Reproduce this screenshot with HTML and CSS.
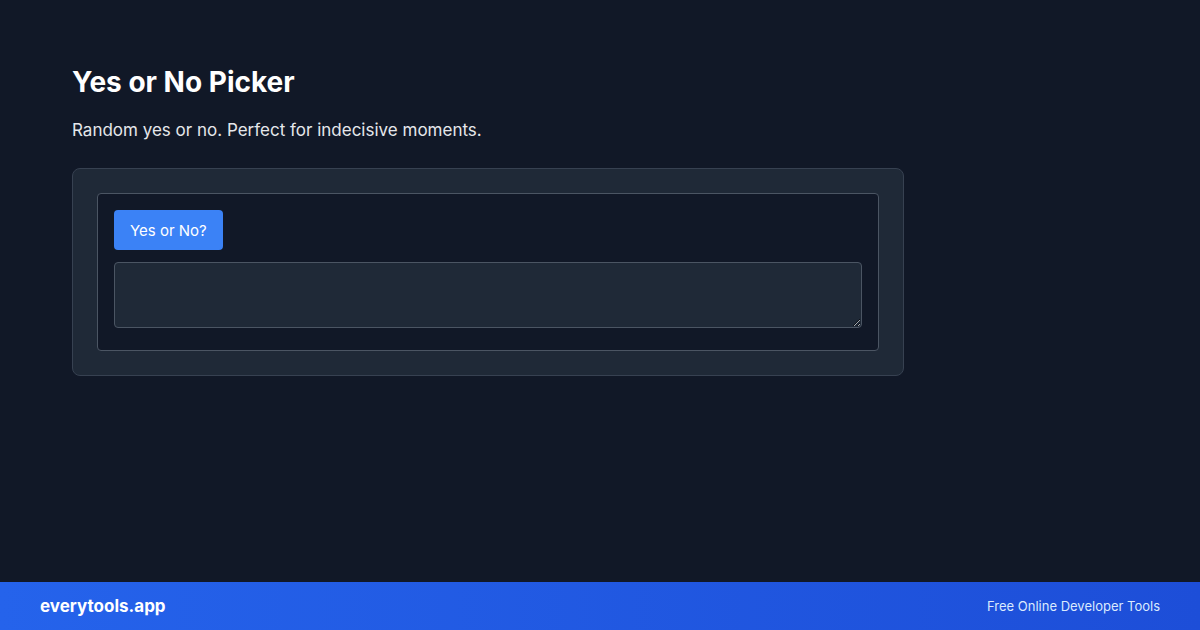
FILE: index.html
```html
<!DOCTYPE html>
<html lang="en">
<head>
    <meta charset="UTF-8">
    <meta name="viewport" content="width=device-width, initial-scale=1.0">
    <title>Yes or No Picker</title>
    <link rel="stylesheet" href="styles.css">
</head>
<body>
    <main class="page">
        <h1 class="page-title">Yes or No Picker</h1>
        <p class="page-desc">Random yes or no. Perfect for indecisive moments.</p>
        <div class="tool-card">
            <div class="tool-panel">
                <button type="button" class="pick-btn">Yes or No?</button>
                <textarea class="result-box" readonly></textarea>
            </div>
        </div>
    </main>
    <footer class="footer">
        <span class="brand">everytools.app</span>
        <span class="tagline">Free Online Developer Tools</span>
    </footer>
</body>
</html>
```

FILE: styles.css
```css
html, body {
    height: 100%;
}

body {
    margin: 0;
    display: flex;
    flex-direction: column;
    background-color: #111827;
    color: #fff;
    font-family: Inter, "Noto Sans", sans-serif;
}

.page {
    flex: 1;
    padding: 64px 72px 0;
    width: 832px;
}

.page-title {
    margin: 0;
    font-size: 28px;
    line-height: 36px;
    font-weight: 700;
}

.page-desc {
    margin: 18px 0 0;
    font-size: 17px;
    line-height: 24px;
    color: #e5e7eb;
}

.tool-card {
    margin-top: 26px;
    padding: 24px;
    background-color: #1f2937;
    border: 1px solid #374151;
    border-radius: 8px;
}

.tool-panel {
    display: flex;
    flex-direction: column;
    align-items: flex-start;
    gap: 12px;
    padding: 16px 16px 22px;
    background-color: #111827;
    border: 1px solid #4b5563;
    border-radius: 4px;
}

.pick-btn {
    height: 40px;
    padding: 0 16px;
    border: none;
    border-radius: 4px;
    background-color: #3b82f6;
    color: #fff;
    font-family: inherit;
    font-size: 15px;
    cursor: pointer;
}

.result-box {
    width: 100%;
    height: 66px;
    box-sizing: border-box;
    background-color: #1f2937;
    border: 1px solid #4b5563;
    border-radius: 4px;
    color: #fff;
    font-family: inherit;
}

.footer {
    height: 48px;
    padding: 0 40px;
    display: flex;
    align-items: center;
    justify-content: space-between;
    background: linear-gradient(90deg, #2563eb, #1d4ed8);
}

.brand {
    font-size: 17px;
    font-weight: 700;
    color: #fff;
}

.tagline {
    font-size: 13px;
    color: #dbeafe;
}
```
